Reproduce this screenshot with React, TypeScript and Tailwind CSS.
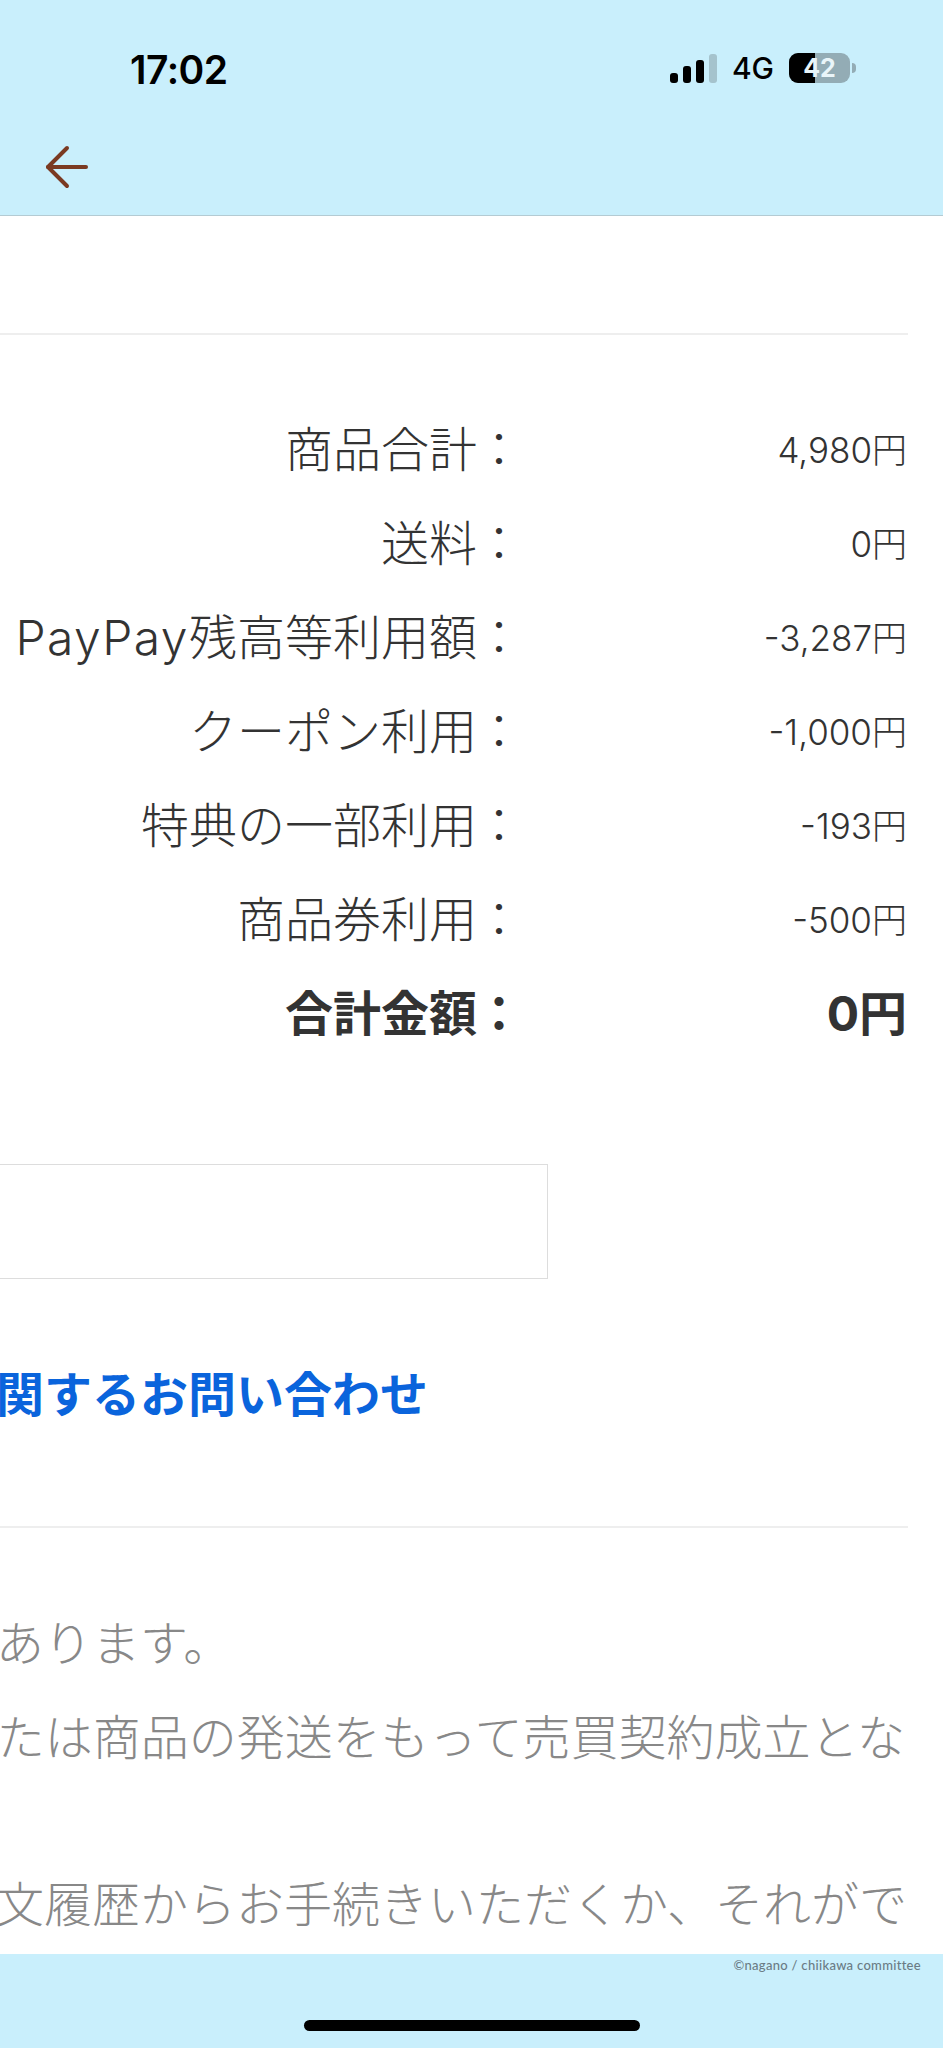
import type { ReactNode } from "react";

const rows: [ReactNode, string][] = [
  ["商品合計", "4,980円"],
  ["送料", "0円"],
  [
    <>
      <span className="tracking-[1.4px]">PayPay</span>残高等利用額
    </>,
    "-3,287円",
  ],
  ["クーポン利用", "-1,000円"],
  ["特典の一部利用", "-193円"],
  ["商品券利用", "-500円"],
];

function Signal() {
  return (
    <div className="flex h-[29px] items-end gap-[5px]">
      <div className="h-[10px] w-[8px] rounded-[3px] bg-black" />
      <div className="h-[17px] w-[8px] rounded-[3px] bg-black" />
      <div className="h-[23px] w-[8px] rounded-[3px] bg-black" />
      <div className="h-[29px] w-[8px] rounded-[3px] bg-[#a5c3cd]" />
    </div>
  );
}

function Battery() {
  return (
    <div className="flex items-center gap-[2px]">
      <div className="relative flex h-[30px] w-[61px] overflow-hidden rounded-[9px] bg-[#93acb5]">
        <div className="h-full w-[26px] bg-black" />
        <div className="absolute inset-0 flex items-center justify-center font-['Inter'] text-[25px] leading-none font-bold text-[#e9f5f9]">
          42
        </div>
      </div>
      <div className="h-[10px] w-[4px] rounded-r-full bg-[#93acb5]" />
    </div>
  );
}

export default function App() {
  return (
    <div className="flex h-[2048px] w-[943px] flex-col overflow-hidden bg-white font-['Inter','Noto_Sans_CJK_JP',sans-serif]">
      <header className="h-[216px] shrink-0 border-b border-[#b4cbd3] bg-[#c9effc]">
        <div className="flex h-[90px] items-end justify-between pr-[87px] pl-[130px]">
          <div className="text-[39px] leading-[40px] font-semibold tracking-[-0.5px] text-black">17:02</div>
          <div className="flex items-center pb-[7px]">
            <Signal />
            <div className="ml-[15px] text-[30px] leading-[29px] font-medium text-black">4G</div>
            <div className="ml-[15px]">
              <Battery />
            </div>
          </div>
        </div>
        <div className="mt-[55px] pl-[45px]">
          <svg width="45" height="45" viewBox="0 0 45 45" fill="none" stroke="#7a3a22" strokeWidth="4" strokeLinecap="round" strokeLinejoin="round" className="block">
            <path d="M22 3 L3 22 L22 41" />
            <path d="M3 22 H41" />
          </svg>
        </div>
      </header>

      <main className="min-h-0 flex-1 overflow-hidden">
        <div className="mt-[117px] h-[2px] w-[908px] bg-[#eeeeee]" />

        <section className="mt-[68px] pr-[36px]">
          {rows.map(([label, value], i) => (
            <div key={i} className="grid h-[94px] grid-cols-[524px_1fr] items-center text-[#333333]">
              <div className="flex justify-end pr-[1px] text-[48px] font-light whitespace-nowrap">
                <span>{label}</span>
                <span className="-ml-[2px]">：</span>
              </div>
              <div className="text-right text-[35px] font-light">{value}</div>
            </div>
          ))}
          <div className="grid h-[94px] grid-cols-[524px_1fr] items-center text-[#333333]">
            <div className="flex justify-end pr-[1px] text-[48px] font-bold whitespace-nowrap">
              <span>合計金額</span>
              <span className="-ml-[2px]">：</span>
            </div>
            <div className="text-right text-[48px] font-bold">0円</div>
          </div>
        </section>

        <div className="mt-[103px] -ml-[2px] h-[115px] w-[550px] border border-[#dddddd]" />

        <div className="mt-[69px] flex h-[94px] w-[428px] items-center justify-end text-[48px] font-bold whitespace-nowrap text-[#0a64dc]">
          関するお問い合わせ
        </div>

        <div className="mt-[84px] h-[2px] w-[908px] bg-[#eeeeee]" />

        <section className="mt-[69px] text-[48px] font-light text-[#888888]">
          <p className="-ml-[4px] h-[94px] leading-[94px] whitespace-nowrap">あります。</p>
          <p className="flex h-[94px] w-[905px] justify-end leading-[94px] whitespace-nowrap">たは商品の発送をもって売買契約成立とな</p>
          <p className="mt-[73px] -ml-[4px] h-[94px] leading-[94px] whitespace-nowrap">文履歴からお手続きいただくか、それがで</p>
        </section>
      </main>

      <footer className="h-[94px] shrink-0 bg-[#c9effc]">
        <div className="pt-[3px] pr-[22px] text-right font-['Lato'] text-[13px] leading-[16px] font-medium tracking-[0.3px] text-[#6b7c85]">
          ©nagano / chiikawa committee
        </div>
        <div className="mx-auto mt-[47px] h-[11px] w-[336px] rounded-full bg-black" />
      </footer>
    </div>
  );
}
